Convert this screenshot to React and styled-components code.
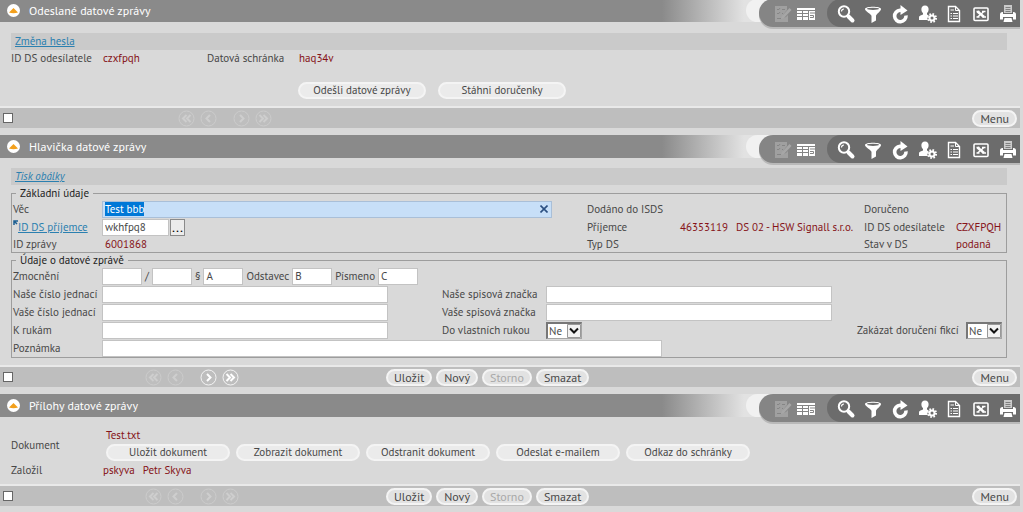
import React, { useEffect, useRef } from "react";
import styled, { createGlobalStyle, css } from "styled-components";

const color = {
    page: "#d9d9d9",
    bar: "#bebebe",
    strip: "#cacaca",
    header: "#8a8a8a",
    tools: "#858585",
    toolsDark: "#6c6c6c",
    text: "#484848",
    value: "#861318",
    link: "#2b80b0",
    line: "#9d9d9d",
    focus: "#c7dff8",
    selected: "#0078d7"
};
const font = `"PT Sans", Lato, "Noto Sans", sans-serif`;

const GlobalStyle = createGlobalStyle`
    * {
        box-sizing: border-box;
    }
    body {
        margin: 0;
        background: ${color.page};
        color: ${color.text};
        font: 11px/14px ${font};
    }
    button, input, select {
        margin: 0;
        font: inherit;
        color: inherit;
    }
`;

const Page = styled.main`
    margin: -1px 3px 0 0;
    min-width: 1000px;
`;

const Panel = styled.section`
    margin-bottom: 7px;
`;

const Header = styled.header`
    display: flex;
    align-items: flex-start;
    height: 23px;
    background: linear-gradient(
        to right,
        ${color.header} calc(100% - 358px),
        #e2e2e2 calc(100% - 276px)
    );
`;

const Title = styled.h2`
    flex: 1;
    margin: 0;
    font-size: 12px;
    line-height: 23px;
    font-weight: 400;
    color: #fff;
`;

const Collapse = styled.button`
    display: flex;
    align-items: center;
    justify-content: center;
    width: 13px;
    height: 13px;
    margin: 5px 9px 0 7px;
    padding: 0;
    border: 0;
    border-radius: 50%;
    background: #fff;
`;

const ToolsEdge = styled.div`
    height: 23px;
    padding-left: 13px;
    border-radius: 12px 0 0 12px;
    background: #f1f1f1;
`;

const Tools = styled.div`
    display: flex;
    height: 28px;
    border-radius: 14px 0 0 14px;
    background: ${color.tools};
    box-shadow: 0 2px 0 #b9b9b9;
`;

const ToolGroup = styled.div`
    display: flex;
    align-items: center;
    gap: ${p => (p.$dark ? 7 : 4)}px;
    padding: ${p => (p.$dark ? "2px 2px 0 9px" : "2px 11px 0 13px")};
    ${p =>
        p.$dark &&
        css`
            border-radius: 14px 0 0 14px;
            background: ${color.toolsDark};
        `}
`;

const Tool = styled.button`
    width: 20px;
    height: 20px;
    padding: 0;
    border: 0;
    background: none;
    color: ${p => (p.disabled ? "#a6a6a6" : "#fff")};
    svg {
        display: block;
    }
`;

const Body = styled.div`
    padding: ${p => p.$top}px 13px ${p => p.$bottom}px 11px;
`;

const LinkStrip = styled.div`
    height: 17px;
    margin-bottom: 1px;
    padding-left: 4px;
    line-height: 17px;
    background: ${color.strip};
`;

const Link = styled.a`
    color: ${color.link};
    font-style: ${p => (p.$italic ? "italic" : "normal")};
`;

const Grid = styled.div`
    display: grid;
    grid-template-columns: ${p => p.$columns};
    grid-template-rows: ${p => p.$rows || "none"};
    grid-auto-rows: 18px;
    align-items: center;
    white-space: nowrap;
`;

const Group = styled.fieldset`
    min-width: 0;
    margin: 0;
    padding: 0;
    border: 1px solid ${color.line};
    legend {
        margin-left: 4px;
        padding: 0 4px;
        height: 14px;
        color: #222;
    }
`;

const Label = styled.label`
    padding-left: ${p => (p.$inset ? 1 : 0)}px;
`;

const Value = styled.output`
    display: flex;
    gap: 8px;
    padding-left: ${p => (p.$inset ? 3 : 0)}px;
    color: ${color.value};
`;

const Field = styled.input`
    width: ${p => p.$width || 40}px;
    height: 17px;
    padding: 0 2px;
    border: 1px solid #c3c3c3;
    border-radius: 0;
    background: #fff;
`;

const Inline = styled.div`
    display: flex;
    align-items: center;
    gap: ${p => p.$gap || 0}px;
`;

const FocusBox = styled.div`
    display: flex;
    align-items: center;
    width: 450px;
    height: 17px;
    border: 1px solid #a9bfd8;
    background: ${color.focus};
    input {
        flex: 1;
        height: 15px;
        padding: 0 2px;
        border: 0;
        outline: 0;
        background: none;
    }
    input::selection {
        color: #fff;
        background: ${color.selected};
    }
    button {
        display: flex;
        padding: 0 3px;
        border: 0;
        background: none;
        color: #2b4f80;
    }
`;

const Lookup = styled.button`
    width: 15px;
    height: 17px;
    margin-left: 1px;
    padding: 0;
    border: 1px solid #8a8a8a;
    background: #ececec;
    color: #000;
    font-size: 14px;
    line-height: 12px;
`;

const SelectBox = styled.div`
    display: flex;
    position: relative;
    width: 36px;
    height: 17px;
    border: 1px solid #a5a5a5;
    border-width: 2px 1px 1px 2px;
    border-color: #777 #a5a5a5 #a5a5a5 #777;
    background: #fff;
    select {
        width: 100%;
        padding: 0 0 0 1px;
        border: 0;
        outline: 0;
        appearance: none;
        background: none;
    }
    svg {
        position: absolute;
        right: 0;
        top: 0;
        pointer-events: none;
    }
`;

const Pill = styled.button`
    height: 17px;
    width: ${p => (p.$width ? p.$width + "px" : "auto")};
    padding: 0 ${p => (p.$width ? 0 : 6)}px;
    border: 2px solid #f4f4f4;
    border-radius: 9px;
    background: ${p => (p.$width ? "#ebebeb" : "#e2e2e2")};
    font-size: ${p => (p.$width ? 11 : 12)}px;
    line-height: 13px;
    white-space: nowrap;
    &:disabled {
        color: #a8a8a8;
    }
`;

const Footer = styled.footer`
    display: grid;
    grid-template-columns: ${p => p.$lead}px ${p => 383 - p.$lead}px 1fr auto;
    align-items: center;
    height: 22px;
    padding: 0 3px;
    border-top: 2px solid #e9e9e9;
    background: ${color.bar};
    input {
        width: 10px;
        height: 10px;
        appearance: none;
        border: 1px solid #666;
        background: #fff;
    }
`;

const Pager = styled.button`
    width: 17px;
    height: 17px;
    padding: 0;
    border: 0;
    background: none;
    color: ${p => (p.disabled ? "#cecece" : "#fff")};
    svg {
        display: block;
    }
    &:nth-child(3) {
        margin-left: 11px;
    }
`;

const icons = {
    edit: (
        <>
            <path d="M3 2h12v4l-4 5v3l3-1 2-2v7H3z" opacity=".8" />
            <path
                d="M5 5.5h2l1-1.500M10 5.5h3M5 9.500h2l1-1.500M10 9.500h1M5 14.500h4"
                fill="none"
                stroke={color.tools}
            />
            <path d="M17.500 4l2 2-7.500 8-3 1 1-3z" />
        </>
    ),
    table: (
        <>
            <path d="M1 4h18v12H1z" />
            <path
                d="M1 6.500h18M1 9.500h12M1 12.500h12M6.500 6.500V16M12.500 6.500V16M14 9h5M14 11.500h3.500v2H14"
                fill="none"
                stroke={color.tools}
            />
        </>
    ),
    search: (
        <>
            <circle cx="8" cy="7.500" r="5.200" fill="none" stroke="currentColor" strokeWidth="2" />
            <path d="M12.500 12.500l4 4" stroke="currentColor" strokeWidth="4" strokeLinecap="round" />
            <path d="M5.500 7.500A2.500 2.500 0 0 1 8 5" fill="none" stroke="currentColor" strokeWidth="1.200" />
        </>
    ),
    filter: (
        <>
            <path d="M2 5c0-3 16-3 16 0 0 2.500-5 5-5 7v4.500L8.500 19v-7C8.500 10 2 7.500 2 5z" />
            <ellipse cx="10" cy="4.800" rx="6" ry="1.100" fill={color.toolsDark} />
        </>
    ),
    refresh: (
        <>
            <path d="M16 11.500A5.700 5.700 0 1 1 10 6.300h1.500" fill="none" stroke="currentColor" strokeWidth="3.600" />
            <path d="M10.500 1l7 5.500-7 4.500z" />
        </>
    ),
    user: (
        <>
            <path d="M8 1.500c2.500 0 3.800 1.700 3.600 4.200-.1 1.600-.8 2.700-1.600 3.400v1.400l1.800.9-1.600 2 .5 2.600H2v-2.500c0-1.800 2.600-2.100 4-2.900V9.100c-.9-.8-1.500-1.900-1.600-3.400C4.200 3.200 5.500 1.500 8 1.500z" />
            <circle cx="15" cy="14" r="2.500" fill="none" stroke="currentColor" strokeWidth="2" />
            <circle
                cx="15"
                cy="14"
                r="4"
                fill="none"
                stroke="currentColor"
                strokeWidth="2"
                strokeDasharray="1.570 1.570"
            />
        </>
    ),
    report: (
        <g fill="none" stroke="currentColor">
            <path d="M4.500 2.500h7l4 4v11h-11z" strokeWidth="1.400" />
            <path d="M11.500 2.500v4h4" />
            <path
                d="M6.500 9.500h1.500M9 9.500h5M6.500 12h1.500M9 12h5M6.500 14.500h1.500M9 14.500h5M6.500 6h3.500"
                strokeWidth="1.200"
            />
        </g>
    ),
    excel: (
        <g fill="none" stroke="currentColor">
            <rect x="3" y="4" width="14" height="12.500" rx="1" strokeWidth="1.600" />
            <path d="M6.500 7.500l6.500 5.500" strokeWidth="2.600" />
            <path d="M13 7.500L6.500 13M11 7.500h3.500M11.500 13h3.500M5.500 7.500h3M5.500 13h3" strokeWidth="1.300" />
        </g>
    ),
    print: (
        <>
            <path d="M6 1h8v8H6z" opacity=".65" />
            <path d="M7.500 3.500h5M7.500 5.500h5M7.500 7.500h5" stroke={color.toolsDark} strokeWidth=".8" />
            <path d="M2 10.500Q2 8 4.500 8H5v2h10V8h.5Q18 8 18 10.500v5h-3V13H5v2.500H2z" />
            <path d="M6.500 14h7l1 4h-9z" />
        </>
    )
};

const Icon = ({ name }) => (
    <svg width="20" height="20" viewBox="0 0 20 20" fill="currentColor">
        {icons[name]}
    </svg>
);

const arrows = {
    "První": "M8.500 5L5 8.500 8.500 12M12.500 5L9 8.500l3.500 3.500",
    "Předchozí": "M10 5L6.500 8.500 10 12",
    "Další": "M7 5l3.500 3.500L7 12",
    "Poslední": "M4.500 5L8 8.500 4.500 12M8.500 5L12 8.500 8.500 12"
};

const Navigation = ({ forward }) => (
    <Inline $gap={5}>
        {Object.keys(arrows).map((name, i) => (
            <Pager key={name} aria-label={name} disabled={i < 2 || !forward}>
                <svg width="17" height="17" fill="none" stroke="currentColor">
                    <circle cx="8.500" cy="8.500" r="7.500" opacity=".8" />
                    <path d={arrows[name]} strokeWidth="2" />
                </svg>
            </Pager>
        ))}
    </Inline>
);

const PanelHeader = ({ title }) => (
    <Header>
        <Collapse aria-label="Sbalit">
            <svg width="9" height="6">
                <path d="M4.500 0L9 4.500Q4.500 6 0 4.500z" fill="#f3a01c" />
            </svg>
        </Collapse>
        <Title>{title}</Title>
        <ToolsEdge>
            <Tools>
                <ToolGroup>
                    <Tool aria-label="Upravit" disabled>
                        <Icon name="edit" />
                    </Tool>
                    <Tool aria-label="Tabulka">
                        <Icon name="table" />
                    </Tool>
                </ToolGroup>
                <ToolGroup $dark>
                    {["search", "filter", "refresh", "user", "report", "excel", "print"].map(name => (
                        <Tool key={name} aria-label={name}>
                            <Icon name={name} />
                        </Tool>
                    ))}
                </ToolGroup>
            </Tools>
        </ToolsEdge>
    </Header>
);

const PanelFooter = ({ lead = 142, forward, actions }) => (
    <Footer $lead={lead}>
        <input type="checkbox" aria-label="Vybrat" />
        <Navigation forward={forward} />
        <Inline $gap={4}>
            {actions && (
                <>
                    <Pill>Uložit</Pill>
                    <Pill>Nový</Pill>
                    <Pill disabled>Storno</Pill>
                    <Pill>Smazat</Pill>
                </>
            )}
        </Inline>
        <Pill>Menu</Pill>
    </Footer>
);

const YesNo = ({ id }) => (
    <SelectBox>
        <select id={id} defaultValue="Ne">
            <option>Ne</option>
            <option>Ano</option>
        </select>
        <svg width="14" height="14" fill="#f2f2f2" stroke="#999">
            <path d="M.5 .5h13v13H.5z" />
            <path d="M3 4.500l4 4 4-4" fill="none" stroke="#111" strokeWidth="2" />
        </svg>
    </SelectBox>
);

const SentActions = styled.div`
    display: flex;
    gap: 12px;
    padding: 17px 0 0 287px;
`;

const SentPanel = () => (
    <Panel>
        <PanelHeader title="Odeslané datové zprávy" />
        <Body $top={11} $bottom={7}>
            <LinkStrip>
                <Link href="#heslo">Změna hesla</Link>
            </LinkStrip>
            <Grid $columns="92px 104px 92px 1fr" $rows="14px">
                <Label htmlFor="sender">ID DS odesílatele</Label>
                <Value id="sender">czxfpqh</Value>
                <Label htmlFor="box">Datová schránka</Label>
                <Value id="box">haq34v</Value>
            </Grid>
            <SentActions>
                <Pill $width={128}>Odešli datové zprávy</Pill>
                <Pill $width={128}>Stáhni doručenky</Pill>
            </SentActions>
        </Body>
        <PanelFooter lead={175} />
    </Panel>
);

const Wide = styled.div`
    display: flex;
    grid-column: 2 / -1;
    align-items: center;
    gap: 3px;
`;

const Cell = styled.div`
    display: flex;
    grid-column: 4 / -1;
`;

const Marker = styled.svg`
    vertical-align: top;
`;

const MessagePanel = () => {
    const subject = useRef(null);
    useEffect(() => {
        subject.current.focus();
        subject.current.select();
    }, []);
    return (
        <Panel>
            <PanelHeader title="Hlavička datové zprávy" />
            <Body $top={10} $bottom={7}>
                <LinkStrip>
                    <Link href="#tisk" $italic>
                        Tisk obálky
                    </Link>
                </LinkStrip>
                <Group>
                    <legend>Základní údaje</legend>
                    <Grid $columns="90px 1fr 93px 184px 92px 50px" $rows="18px 18px 16px">
                        <Label $inset htmlFor="subject">Věc</Label>
                        <FocusBox>
                            <input id="subject" ref={subject} defaultValue="Test bbb" />
                            <button aria-label="Vymazat">
                                <svg width="8" height="8" stroke="currentColor" strokeWidth="1.600">
                                    <path d="M.5 .5l7 7M7.500 .5l-7 7" />
                                </svg>
                            </button>
                        </FocusBox>
                        <Label htmlFor="delivered">Dodáno do ISDS</Label>
                        <Value id="delivered" />
                        <Label htmlFor="received">Doručeno</Label>
                        <Value id="received" />

                        <Label $inset htmlFor="recipient">
                            <Marker width="5" height="5">
                                <path d="M1 5V1h4M1 1l3 3" fill="none" stroke="#1d5f92" strokeWidth="1.500" />
                            </Marker>
                            <Link href="#prijemce">ID DS příjemce</Link>
                        </Label>
                        <Inline>
                            <Field id="recipient" $width={67} defaultValue="wkhfpq8" />
                            <Lookup aria-label="Vyhledat">...</Lookup>
                        </Inline>
                        <Label htmlFor="recipientName">Příjemce</Label>
                        <Value id="recipientName">
                            <span>46353119</span>
                            <span>DS 02 - HSW Signall s.r.o.</span>
                        </Value>
                        <Label htmlFor="senderId">ID DS odesílatele</Label>
                        <Value id="senderId">CZXFPQH</Value>

                        <Label $inset htmlFor="messageId">ID zprávy</Label>
                        <Value $inset id="messageId">6001868</Value>
                        <Label htmlFor="type">Typ DS</Label>
                        <Value id="type" />
                        <Label htmlFor="state">Stav v DS</Label>
                        <Value id="state">podaná</Value>
                    </Grid>
                </Group>
                <Group>
                    <legend>Údaje o datové zprávě</legend>
                    <Grid $columns="90px 340px 104px 1fr 109px 40px">
                        <Label $inset htmlFor="law">Zmocnění</Label>
                        <Wide>
                            <Field id="law" />
                            /
                            <Field aria-label="Rok" />
                            §
                            <Field aria-label="Paragraf" defaultValue="A" />
                            <Label htmlFor="section">Odstavec</Label>
                            <Field id="section" defaultValue="B" />
                            <Label htmlFor="letter">Písmeno</Label>
                            <Field id="letter" defaultValue="C" />
                        </Wide>

                        <Label $inset htmlFor="ourRef">Naše číslo jednací</Label>
                        <Field id="ourRef" $width={286} />
                        <Label htmlFor="ourFile">Naše spisová značka</Label>
                        <Cell>
                            <Field id="ourFile" $width={286} />
                        </Cell>

                        <Label $inset htmlFor="yourRef">Vaše číslo jednací</Label>
                        <Field id="yourRef" $width={286} />
                        <Label htmlFor="yourFile">Vaše spisová značka</Label>
                        <Cell>
                            <Field id="yourFile" $width={286} />
                        </Cell>

                        <Label $inset htmlFor="hands">K rukám</Label>
                        <Field id="hands" $width={286} />
                        <Label htmlFor="ownHands">Do vlastních rukou</Label>
                        <YesNo id="ownHands" />
                        <Label htmlFor="fiction">Zakázat doručení fikcí</Label>
                        <YesNo id="fiction" />

                        <Label $inset htmlFor="note">Poznámka</Label>
                        <Wide>
                            <Field id="note" $width={560} />
                        </Wide>
                    </Grid>
                </Group>
            </Body>
            <PanelFooter forward actions />
        </Panel>
    );
};

const documentActions = [
    "Uložit dokument",
    "Zobrazit dokument",
    "Odstranit dokument",
    "Odeslat e-mailem",
    "Odkaz do schránky"
];

const DocumentRow = styled.div`
    display: grid;
    grid-template-columns: 92px 1fr;
    align-items: center;
`;

const DocumentActions = styled.div`
    display: flex;
    gap: 6px;
    padding: 2px 0 0 3px;
`;

const AttachmentsPanel = () => (
    <Panel>
        <PanelHeader title="Přílohy datové zprávy" />
        <Body $top={11} $bottom={5}>
            <DocumentRow>
                <Label htmlFor="file">Dokument</Label>
                <div>
                    <Value $inset id="file">Test.txt</Value>
                    <DocumentActions>
                        {documentActions.map(name => (
                            <Pill key={name} $width={124}>{name}</Pill>
                        ))}
                    </DocumentActions>
                </div>
            </DocumentRow>
            <Grid $columns="92px 1fr">
                <Label htmlFor="author">Založil</Label>
                <Value id="author">
                    <span>pskyva</span>
                    <span>Petr Skyva</span>
                </Value>
            </Grid>
        </Body>
        <PanelFooter actions />
    </Panel>
);

const App = () => (
    <>
        <GlobalStyle />
        <Page>
            <SentPanel />
            <MessagePanel />
            <AttachmentsPanel />
        </Page>
    </>
);

export default App;
